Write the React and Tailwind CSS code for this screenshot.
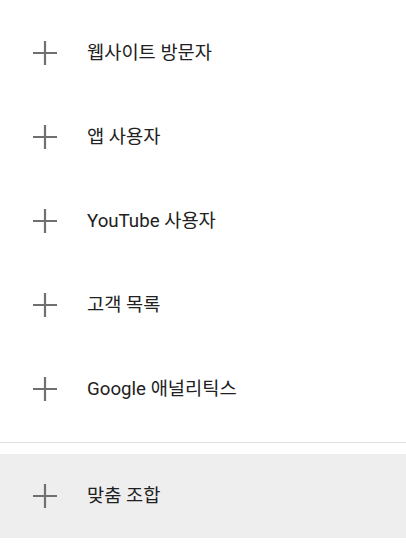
import React from 'react';

const items = ['웹사이트 방문자', '앱 사용자', 'YouTube 사용자', '고객 목록', 'Google 애널리틱스'];

function PlusIcon() {
    return (
        <svg className="w-6 h-6 shrink-0" viewBox="0 0 24 24" fill="none">
            <path d="M12 0v24M0 12h24" stroke="#707070" strokeWidth="2.2" />
        </svg>
    );
}

function Row({ label, active = false }) {
    return (
        <div className={`flex items-center h-[84px] pl-[33px] ${active ? 'bg-[#eeeeee]' : 'bg-white'}`}>
            <PlusIcon />
            <span className="ml-[30px] text-[18.7px] leading-none text-[#212121]">{label}</span>
        </div>
    );
}

export default function App() {
    return (
        <div
            className="w-[406px] h-[544px] bg-white pt-[11px]"
            style={{ fontFamily: 'Roboto, "Noto Sans CJK KR", sans-serif' }}
        >
            {items.map((item) => (
                <Row key={item} label={item} />
            ))}
            <div className="my-[11px] h-px bg-[#e0e0e0]" />
            <Row label="맞춤 조합" active />
        </div>
    );
}
